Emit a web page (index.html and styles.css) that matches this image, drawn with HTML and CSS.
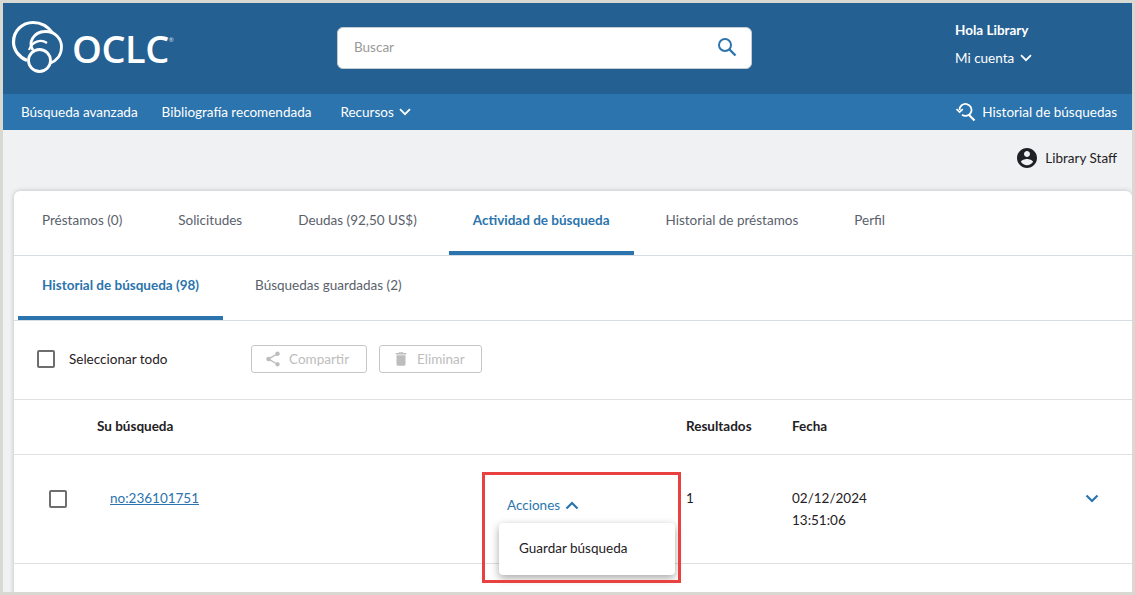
FILE: index.html
```html
<!DOCTYPE html>
<html lang="es">
  <head>
    <meta charset="utf-8">
    <title>OCLC - Actividad de búsqueda</title>
    <link rel="stylesheet" href="styles.css">
  </head>
  <body>
    <div class="frame">
      <header class="top">
        <div class="logo">
          <svg class="logo-mark" width="56" height="56" viewBox="0 0 56 56" fill="none" stroke="#fff">
            <path d="M16 41.500C8 38 2.500 31 2.500 23 C2.500 12 11 3.500 22 3.500 C30 3.500 37 7.500 41.500 14" stroke-width="3.200"/>
            <path d="M22 31 C17 24 22 13 34 12.500 C44 12 50.500 20 50.500 28 C50.500 36 45.500 42 38.500 44.500" stroke-width="2.800"/>
            <path d="M18 31 C21 22 30 20 36 24" stroke-width="2.200"/>
            <circle cx="28.500" cy="41.500" r="11" stroke-width="2.800"/>
          </svg>
          <span class="logo-text">OCLC</span><span class="logo-reg">®</span>
        </div>
        <div class="search">
          <span class="search-ph">Buscar</span>
          <svg width="20" height="20" viewBox="0 0 20 20" fill="none" stroke="#2b74ad" stroke-width="2">
            <circle cx="8" cy="8" r="6"/>
            <path d="M12.500 12.500 L18.500 18.500" stroke-width="2.400"/>
          </svg>
        </div>
        <div class="account">
          <div class="hello">Hola Library</div>
          <div class="my">Mi cuenta
            <svg class="chev" width="12" height="8" viewBox="0 0 12 8" fill="none" stroke="#fff" stroke-width="1.800"><path d="M1 1.200 L6 6.200 L11 1.200"/></svg>
          </div>
        </div>
      </header>

      <nav class="nav">
        <a class="nav-link">Búsqueda avanzada</a>
        <a class="nav-link">Bibliografía recomendada</a>
        <a class="nav-link nav-res">Recursos
          <svg class="chev" width="12" height="8" viewBox="0 0 12 8" fill="none" stroke="#fff" stroke-width="1.800"><path d="M1 1.200 L6 6.200 L11 1.200"/></svg>
        </a>
        <a class="nav-link nav-hist">
          <svg width="20" height="20" viewBox="0 0 20 20" fill="none" stroke="#fff" stroke-width="1.800">
            <path d="M3.500 8 A6 6 0 1 1 6 12.800"/>
            <path d="M0.500 7 L3.600 10.200 L6.800 7.200" stroke-width="1.600"/>
            <path d="M12.800 12.800 L18.500 18.500" stroke-width="2.200"/>
          </svg>
          Historial de búsquedas
        </a>
      </nav>

      <div class="staff">
        <svg width="24" height="24" viewBox="0 0 24 24" fill="#1f2124"><path d="M12 2C6.480 2 2 6.480 2 12s4.480 10 10 10 10-4.480 10-10S17.520 2 12 2zm0 3c1.660 0 3 1.340 3 3s-1.340 3-3 3-3-1.340-3-3 1.340-3 3-3zm0 14.200c-2.500 0-4.710-1.280-6-3.220.030-1.990 4-3.080 6-3.080 1.990 0 5.970 1.090 6 3.080-1.290 1.940-3.500 3.220-6 3.220z"/></svg>
        Library Staff
      </div>

      <main class="card">
        <div class="tabs">
          <a class="tab">Préstamos (0)</a>
          <a class="tab">Solicitudes</a>
          <a class="tab">Deudas (92,50 US$)</a>
          <a class="tab active">Actividad de búsqueda</a>
          <a class="tab">Historial de préstamos</a>
          <a class="tab">Perfil</a>
        </div>
        <div class="tabs">
          <a class="tab active">Historial de búsqueda (98)</a>
          <a class="tab">Búsquedas guardadas (2)</a>
        </div>

        <div class="toolbar">
          <span class="check"></span>
          <span class="select-all">Seleccionar todo</span>
          <button class="btn btn-share">
            <svg width="18" height="18" viewBox="0 0 24 24" fill="#bdbdbd"><path d="M18 16.080c-.760 0-1.440.300-1.960.770L8.910 12.700c.050-.230.090-.460.090-.700s-.040-.470-.090-.700l7.050-4.110c.540.500 1.250.810 2.040.810 1.660 0 3-1.340 3-3s-1.340-3-3-3-3 1.340-3 3c0 .240.040.470.090.700L8.040 9.810C7.500 9.310 6.790 9 6 9c-1.660 0-3 1.340-3 3s1.340 3 3 3c.790 0 1.500-.310 2.040-.810l7.120 4.160c-.050.210-.080.430-.080.650 0 1.610 1.310 2.920 2.920 2.920s2.920-1.310 2.920-2.920-1.310-2.920-2.920-2.920z"/></svg>
            Compartir
          </button>
          <button class="btn btn-del">
            <svg width="18" height="18" viewBox="0 0 24 24" fill="#bdbdbd"><path d="M6 19c0 1.100.900 2 2 2h8c1.100 0 2-.900 2-2V7H6v12zM19 4h-3.500l-1-1h-5l-1 1H5v2h14V4z"/></svg>
            Eliminar
          </button>
        </div>

        <div class="thead">
          <span></span>
          <span>Su búsqueda</span>
          <span>Resultados</span>
          <span>Fecha</span>
        </div>

        <div class="row">
          <span class="check row-check"></span>
          <a class="row-link">no:236101751</a>
          <div class="actions">
            <a class="actions-toggle">Acciones
              <svg width="14" height="9" viewBox="0 0 14 9" fill="none" stroke="#2b74ad" stroke-width="2.200"><path d="M1.500 7.500 L7 2 L12.500 7.500"/></svg>
            </a>
            <div class="menu">Guardar búsqueda</div>
            <div class="highlight"></div>
          </div>
          <span class="row-count">1</span>
          <span class="row-date">02/12/2024<br>13:51:06</span>
          <svg class="row-chev" width="14" height="9" viewBox="0 0 14 9" fill="none" stroke="#2b74ad" stroke-width="2.200"><path d="M1.500 1.500 L7 7 L12.500 1.500"/></svg>
        </div>
      </main>
    </div>
  </body>
</html>
```

FILE: styles.css
```css
* {
  box-sizing: border-box;
}
html, body {
  margin: 0;
  height: 100%;
}
body {
  font-family: Lato, "Liberation Sans", sans-serif;
  font-size: 13.500px;
  color: #1f2124;
  overflow: hidden;
}
.frame {
  height: 595px;
  border: 3px solid #d9d9d4;
  background: #f0f1f3;
  overflow: hidden;
}

/* top bar */
.top {
  height: 91px;
  background: #256093;
  display: flex;
  align-items: flex-start;
  color: #fff;
}
.logo {
  width: 334px;
  height: 91px;
  padding: 15px 0 0 8px;
  display: flex;
  align-items: flex-start;
}
.logo-mark {
  flex: none;
  margin-top: 1px;
}
.logo-text {
  font-family: "Open Sans", sans-serif;
  font-size: 38px;
  line-height: 52px;
  font-weight: 600;
  margin: 4px 0 0 5px;
  letter-spacing: -0.5px;
}
.logo-reg {
  font-size: 6px;
  line-height: 8px;
  margin-top: 18px;
  opacity: .8;
}
.search {
  width: 415px;
  height: 42px;
  margin-top: 24px;
  background: #fff;
  border: 1px solid #c4ccd4;
  border-radius: 6px;
  display: flex;
  align-items: center;
  justify-content: space-between;
  padding: 0 14px 2px 16px;
}
.search-ph {
  color: #9a9a9a;
  font-size: 13.500px;
}
.account {
  margin-left: 203px;
  padding-top: 18px;
}
.hello {
  font-weight: 700;
  line-height: 18px;
}
.my {
  margin-top: 10px;
  line-height: 18px;
  display: flex;
  align-items: center;
  gap: 6px;
}

/* nav bar */
.nav {
  height: 36px;
  background: #2b74ad;
  display: flex;
  align-items: center;
  padding: 0 15px 0 18px;
  color: #fff;
}
.nav-link {
  margin-right: 24px;
  display: flex;
  align-items: center;
  gap: 5px;
}
.nav-res {
  margin-left: 5px;
}
.nav-hist {
  margin: 0 0 0 auto;
  gap: 6px;
}

.staff {
  height: 61px;
  padding: 0 15px 6px 0;
  display: flex;
  align-items: center;
  justify-content: flex-end;
  gap: 6px;
}

/* card */
.card {
  margin-left: 11px;
  height: 420px;
  background: #fff;
  border-radius: 6px 6px 0 0;
  box-shadow: 0 0 5px rgba(0, 0, 0, .22);
}
.tabs {
  height: 65px;
  border-bottom: 1px solid #d5dce4;
  display: flex;
  padding-left: 4px;
}
.tab {
  height: 64px;
  padding: 20px 24px 0;
  margin-right: 8px;
  color: #5a616b;
  line-height: 18px;
}
.tab.active {
  color: #2b74ad;
  font-weight: 700;
  border-bottom: 4px solid #2b74ad;
}
.toolbar {
  height: 79px;
  border-bottom: 1px solid #e0e0e0;
  display: flex;
  align-items: center;
  padding: 0 0 2px 23px;
}
.check {
  display: block;
  flex: none;
  width: 18px;
  height: 18px;
  border: 2px solid #6e6e6e;
  border-radius: 2px;
  background: #fff;
}
.select-all {
  margin-left: 14px;
  width: 182px;
}
.btn {
  height: 28px;
  margin-right: 12px;
  padding: 0 12px;
  border: 1px solid #c6c6c6;
  border-radius: 3px;
  background: #fff;
  color: #bdbdbd;
  font: inherit;
  display: flex;
  align-items: center;
  gap: 7px;
}
.btn-share {
  width: 116px;
}
.btn-del {
  width: 103px;
}
.thead {
  height: 55px;
  border-bottom: 1px solid #e0e0e0;
  display: grid;
  grid-template-columns: 83px 589px 106px 1fr;
  align-items: center;
  font-weight: 700;
  padding-bottom: 2px;
}
.row {
  height: 109px;
  border-bottom: 1px solid #e0e0e0;
  display: grid;
  grid-template-columns: 96px 397px 179px 106px 293px 1fr;
  align-items: start;
}
.row-check {
  margin: 35px 0 0 35px;
}
.row-link {
  margin-top: 34px;
  color: #2b74ad;
  text-decoration: underline;
  line-height: 18px;
}
.row-count {
  margin-top: 34px;
  line-height: 18px;
}
.row-date {
  margin-top: 32px;
  line-height: 22px;
}
.row-chev {
  margin-top: 39px;
}
.actions {
  position: relative;
  height: 100%;
}
.actions-toggle {
  display: flex;
  align-items: center;
  gap: 5px;
  margin-top: 41px;
  line-height: 18px;
  color: #2b74ad;
}
.menu {
  position: absolute;
  left: -8px;
  top: 68px;
  width: 176px;
  height: 52px;
  padding: 16px 0 0 20px;
  line-height: 18px;
  background: #fff;
  border-radius: 4px;
  box-shadow: 0 3px 8px rgba(0, 0, 0, .35);
}
.highlight {
  position: absolute;
  left: -25px;
  top: 17px;
  width: 199px;
  height: 111px;
  border: 3px solid #e8413f;
}
```
